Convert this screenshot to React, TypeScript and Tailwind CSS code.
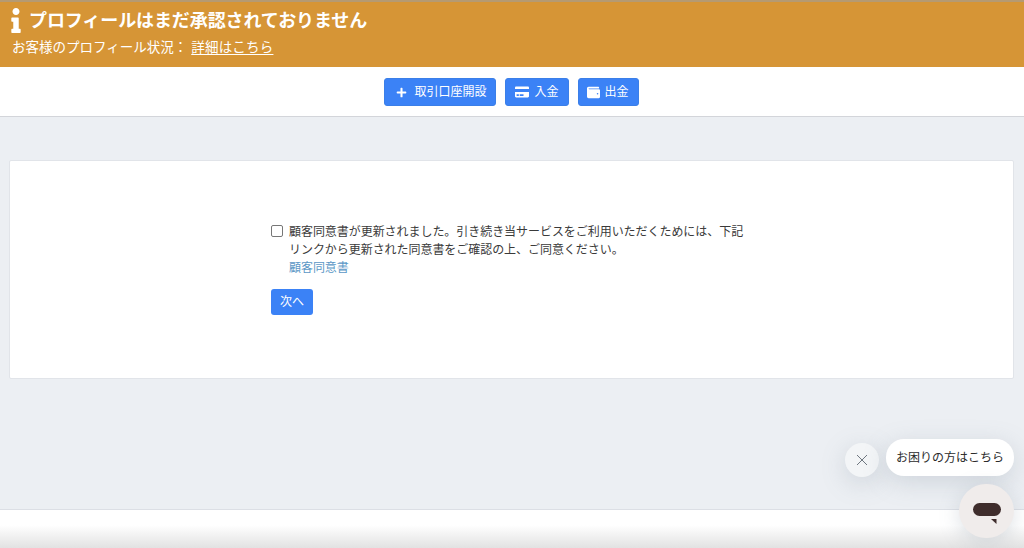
import { FaInfo, FaPlus, FaCreditCard, FaWallet } from "react-icons/fa";

const font = { fontFamily: '"Inter", "Noto Sans CJK JP", sans-serif' };

export default function App() {
  return (
    <div
      className="relative flex h-[548px] w-[1024px] flex-col overflow-hidden bg-[#eceff3] text-[#3a3a3a]"
      style={font}
    >
      <header className="h-[67px] shrink-0 border-t-2 border-[#b59a72] bg-[#d69536] pl-[11px] pt-[5px] text-white">
        <div className="flex h-[27px] items-center">
          <FaInfo className="h-[25px] w-[10px] shrink-0" />
          <h1 className="ml-[8px] text-[18px] font-bold leading-[27px] tracking-[-0.1px]">プロフィールはまだ承認されておりません</h1>
        </div>
        <p className="mt-[1px] pl-[1px] text-[13.5px] leading-[24px]">
          お客様のプロフィール状況：
          <a className="ml-[4px] tracking-[0.2px] underline underline-offset-2">詳細はこちら</a>
        </p>
      </header>

      <nav className="flex h-[50px] shrink-0 items-center justify-center gap-[9px] border-b border-[#d3d5da] bg-white pr-[2px] pt-[1px]">
        <button className="flex h-[28px] w-[112px] items-center gap-[8px] rounded-[3px] border border-[#3b7fe8] bg-[#3b82f6] pl-[11px] text-[12px] text-white">
          <FaPlus className="h-[11px] w-[11px]" />
          <span>取引口座開設</span>
        </button>
        <button className="flex h-[28px] w-[64px] items-center gap-[6px] rounded-[3px] border border-[#3b7fe8] bg-[#3b82f6] pl-[9px] text-[12px] text-white">
          <FaCreditCard className="h-[14px] w-[14px]" />
          <span>入金</span>
        </button>
        <button className="flex h-[28px] w-[61px] items-center gap-[5px] rounded-[3px] border border-[#3b7fe8] bg-[#3b82f6] pl-[8px] text-[12px] text-white">
          <FaWallet className="h-[13px] w-[13px]" />
          <span>出金</span>
        </button>
      </nav>

      <main className="flex-1 pl-[9px] pr-[10px] pt-[43px]">
        <section className="h-[219px] rounded-[2px] border border-[#e1e4e9] bg-white pl-[261px] pt-[62px]">
          <div className="w-[474px] text-[12px] leading-[18px] tracking-[-0.05px]">
            <div className="flex">
              <input
                type="checkbox"
                className="mt-[2px] h-[12px] w-[12px] shrink-0 appearance-none rounded-[2px] border border-[#777777] bg-white"
              />
              <div className="ml-[6px]">
                <p>顧客同意書が更新されました。引き続き当サービスをご利用いただくためには、下記リンクから更新された同意書をご確認の上、ご同意ください。</p>
                <a className="text-[#5b97c6]">顧客同意書</a>
              </div>
            </div>
            <button className="mt-[12px] h-[26px] w-[42px] rounded-[3px] bg-[#3b82f6] text-[12px] text-white">次へ</button>
          </div>
        </section>
      </main>

      <footer className="h-[39px] shrink-0 border-t border-[#dcdfe5] bg-gradient-to-b from-white from-40% to-[#e2e2e2]" />

      <div className="absolute left-[845px] top-[443px] flex h-[34px] w-[34px] items-center justify-center rounded-full bg-[#f3f5f7] shadow-[0_6px_24px_rgba(120,135,150,0.25)]">
        <svg width="12" height="12" viewBox="0 0 12 12" fill="none" stroke="#6f7780" strokeWidth="1">
          <path d="M1 1l10 10M11 1L1 11" />
        </svg>
      </div>
      <div className="absolute left-[886px] top-[439px] flex h-[37px] w-[128px] items-center justify-center rounded-[18px] bg-white text-[12px] text-[#2b2b2b] shadow-[0_6px_24px_rgba(120,135,150,0.25)]">
        お困りの方はこちら
      </div>
      <div className="absolute left-[959px] top-[484px] flex h-[54px] w-[55px] items-center justify-center rounded-full bg-[#f0eceb] shadow-[0_4px_20px_rgba(120,135,150,0.25)]">
        <svg width="28" height="26" viewBox="0 0 28 26">
          <rect x="0" y="5" width="28" height="13" rx="6.5" fill="#3f2d2c" />
          <path d="M18 21h5.5v5z" fill="#3f2d2c" />
        </svg>
      </div>
    </div>
  );
}
